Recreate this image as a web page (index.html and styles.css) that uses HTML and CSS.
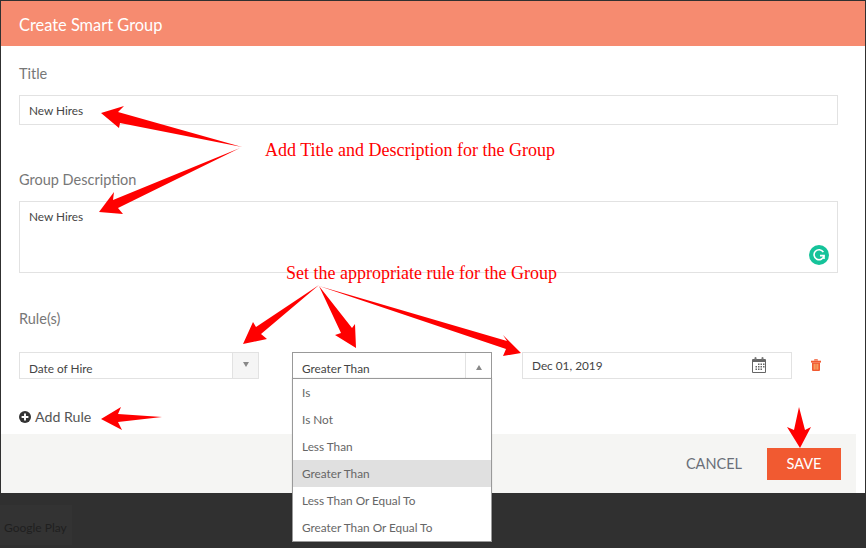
FILE: index.html
```html
<!DOCTYPE html>
<html lang="en">
<head>
<meta charset="utf-8">
<title>Create Smart Group</title>
<link rel="stylesheet" href="styles.css">
</head>
<body>
<div class="promo">Google Play</div>
<main class="modal">
  <header class="modal-head">Create Smart Group</header>
  <section class="modal-body">
    <div class="label label-title">Title</div>
    <div class="input input-line">New Hires</div>
    <div class="label label-desc">Group Description</div>
    <div class="input textarea">New Hires
      <svg class="grammarly" width="20" height="20" viewBox="0 0 20 20"><circle cx="10" cy="10" r="10" fill="#15c39a"/><path d="M14.4 7.2A5 5 0 1 0 15 10.6H11" fill="none" stroke="#fff" stroke-width="1.6"/><path d="M15 10.6V14" stroke="#fff" stroke-width="1.6"/></svg>
    </div>
    <div class="label label-rules">Rule(s)</div>
    <div class="rule-row">
      <div class="select select-field">
        <span class="select-value">Date of Hire</span>
        <span class="select-btn"><svg width="6" height="5" viewBox="0 0 6 5"><path d="M0 0H6L3 5Z" fill="#888"/></svg></span>
      </div>
      <div class="select select-op">
        <span class="select-value">Greater Than</span>
        <span class="select-btn"><svg width="6" height="5" viewBox="0 0 6 5"><path d="M0 5H6L3 0Z" fill="#888"/></svg></span>
        <ul class="menu">
          <li>Is</li>
          <li>Is Not</li>
          <li>Less Than</li>
          <li class="active">Greater Than</li>
          <li>Less Than Or Equal To</li>
          <li>Greater Than Or Equal To</li>
        </ul>
      </div>
      <div class="date">
        <span>Dec 01, 2019</span>
        <svg class="cal" width="14" height="16" viewBox="0 0 14 16"><path d="M0.5 2.5H13.5V15.5H0.5Z" fill="#fff" stroke="#666"/><rect x="1" y="2" width="12" height="3" fill="#666"/><rect x="2.5" y="0" width="2" height="3" rx="1" fill="#777"/><rect x="9.5" y="0" width="2" height="3" rx="1" fill="#777"/><path d="M6 6.5h1.500v1.500H6zM8.500 6.500h1.500v1.500H8.500zM11 6.500h1.500v1.500H11zM3.500 9h1.500v1.500H3.500zM6 9h1.500v1.500H6zM8.500 9h1.500v1.500H8.500zM11 9h1.500v1.500H11zM3.500 11.500h1.500v1.500H3.500zM6 11.500h1.500v1.500H6zM8.500 11.500h1.500v1.500H8.500z" fill="#666"/></svg>
      </div>
      <svg class="trash" width="10" height="12" viewBox="0 0 10 12"><path d="M3.500 1.500V.6h3v.9M0 2h10v1.200H0z" fill="#f15a31" stroke="#f15a31" stroke-width=".6"/><path d="M1 3.500h8V11a1 1 0 0 1-1 1H2a1 1 0 0 1-1-1Z" fill="#f15a31"/><path d="M3.200 4.800v5.800M5 4.800v5.800M6.800 4.800v5.800" stroke="#fbc47a" stroke-width=".9"/></svg>
    </div>
    <div class="add-rule">
      <svg width="12" height="12" viewBox="0 0 12 12"><circle cx="6" cy="6" r="6" fill="#333"/><path d="M6 2.600v6.800M2.600 6h6.800" stroke="#fff" stroke-width="1.900"/></svg>
      <span>Add Rule</span>
    </div>
  </section>
  <footer class="modal-foot">
    <span class="cancel">CANCEL</span>
    <span class="save">SAVE</span>
  </footer>
</main>

<svg class="arrows" width="866" height="548" viewBox="0 0 866 548">
  <g fill="#ff0000">
    <polygon points="101,113 124,106 118,112 242,147 120,123 119,128"/>
    <polygon points="99,212 114,192 113,200 240,148 118,208 123,214"/>
    <polygon points="243,344 253,322 256,327 319,285 261,334 267,339"/>
    <polygon points="356,348 335,335 341,333 319,286 352,328 355,324"/>
    <polygon points="521,353 503,356 506,349 319,286 507,341 503,335"/>
    <polygon points="101,419 121,407 118,414 162,417 118,422 122,430"/>
    <polygon points="800,448 787,427 794,430 799,407 805,430 811,427"/>
  </g>
</svg>
<div class="note note-one">Add Title and Description for the Group</div>
<div class="note note-two">Set the appropriate rule for the Group</div>
</body>
</html>
```

FILE: styles.css
```css
* { box-sizing: border-box; }
html, body { margin: 0; height: 548px; overflow: hidden; }
body {
  position: relative;
  padding: 1px 1px 0;
  background: #303030;
  font-family: Lato, "Liberation Sans", sans-serif;
  color: #444;
}
.modal {
  width: 864px;
  height: 492px;
  background: #fff;
  display: flex;
  flex-direction: column;
}
.modal-head {
  height: 45px;
  flex: none;
  padding-left: 18px;
  background: #f68b70;
  color: #fff;
  font-size: 16.4px;
  line-height: 47px;
}
.modal-body {
  flex: 1;
  padding: 0 18px;
}
.label {
  font-size: 14.5px;
  line-height: 18px;
  color: #777;
}
.label-title { margin-top: 19px; }
.label-desc { margin-top: 46px; }
.label-rules { margin-top: 37px; }
.input {
  width: 819px;
  border: 1px solid #e2e2e2;
  padding-left: 9px;
  font-size: 11.8px;
  color: #444;
}
.input-line {
  height: 30px;
  margin-top: 12px;
  line-height: 29px;
}
.textarea {
  position: relative;
  height: 72px;
  margin-top: 12px;
  padding-top: 6px;
  line-height: 18px;
}
.grammarly { position: absolute; right: 8px; bottom: 7px; }
.rule-row {
  display: flex;
  align-items: flex-start;
  height: 27px;
  margin-top: 24px;
}
.select {
  position: relative;
  display: flex;
  width: 240px;
  height: 27px;
  border: 1px solid #e2e2e2;
  font-size: 11.8px;
}
.select-op {
  width: 200px;
  margin-left: 33px;
  border-color: #999;
}
.select-value {
  flex: 1;
  padding-left: 9px;
  line-height: 32px;
}
.select-btn {
  width: 26px;
  background: #f5f5f5;
  border-left: 1px solid #e2e2e2;
  display: flex;
  align-items: center;
  justify-content: center;
}
.select-op .select-btn { background: #fff; padding-top: 4px; }
.select-field .select-btn svg { margin-top: -3px; }
.menu {
  position: absolute;
  z-index: 2;
  left: -1px;
  top: 25px;
  width: 200px;
  margin: 0;
  padding: 0;
  list-style: none;
  background: #fff;
  border: 1px solid #999;
  box-shadow: 0 0 1px rgba(0,0,0,.2);
}
.menu li {
  height: 27px;
  padding-left: 9px;
  font-size: 11.8px;
  line-height: 27px;
  color: #666;
}
.menu li.active { background: #e0e0e0; }
.date {
  display: flex;
  align-items: center;
  justify-content: space-between;
  width: 270px;
  height: 27px;
  margin-left: 30px;
  padding: 0 25px 0 9px;
  border: 1px solid #e2e2e2;
  font-size: 11.8px;
}
.cal { margin-top: -1px; }
.trash { margin: 7px 0 0 19px; }
.add-rule {
  display: flex;
  align-items: center;
  gap: 4px;
  margin-top: 29px;
  font-size: 14.2px;
  line-height: 18px;
  color: #555;
}
.modal-foot {
  flex: none;
  display: flex;
  align-items: center;
  justify-content: flex-end;
  width: 855px;
  height: 59px;
  padding: 0 15px 0 0;
  background: #f5f5f3;
}
.cancel { font-size: 14.5px; color: #6a6f78; margin-right: 25px; }
.save {
  width: 74px;
  height: 32px;
  background: #f15a31;
  color: #fff;
  font-size: 14.6px;
  line-height: 32px;
  text-align: center;
}
.promo {
  position: absolute;
  left: 0;
  top: 505px;
  width: 72px;
  height: 40px;
  padding-left: 4px;
  background: #333;
  color: #1f1f1f;
  font-size: 12px;
  line-height: 45px;
}
.arrows { position: absolute; left: 0; top: 0; z-index: 3; pointer-events: none; }
.note {
  position: absolute;
  z-index: 3;
  font-family: "Liberation Serif", serif;
  font-size: 18px;
  line-height: 20px;
  color: #ff0000;
  white-space: nowrap;
}
.note-one { left: 265px; top: 140px; }
.note-two { left: 286px; top: 263px; }
```
